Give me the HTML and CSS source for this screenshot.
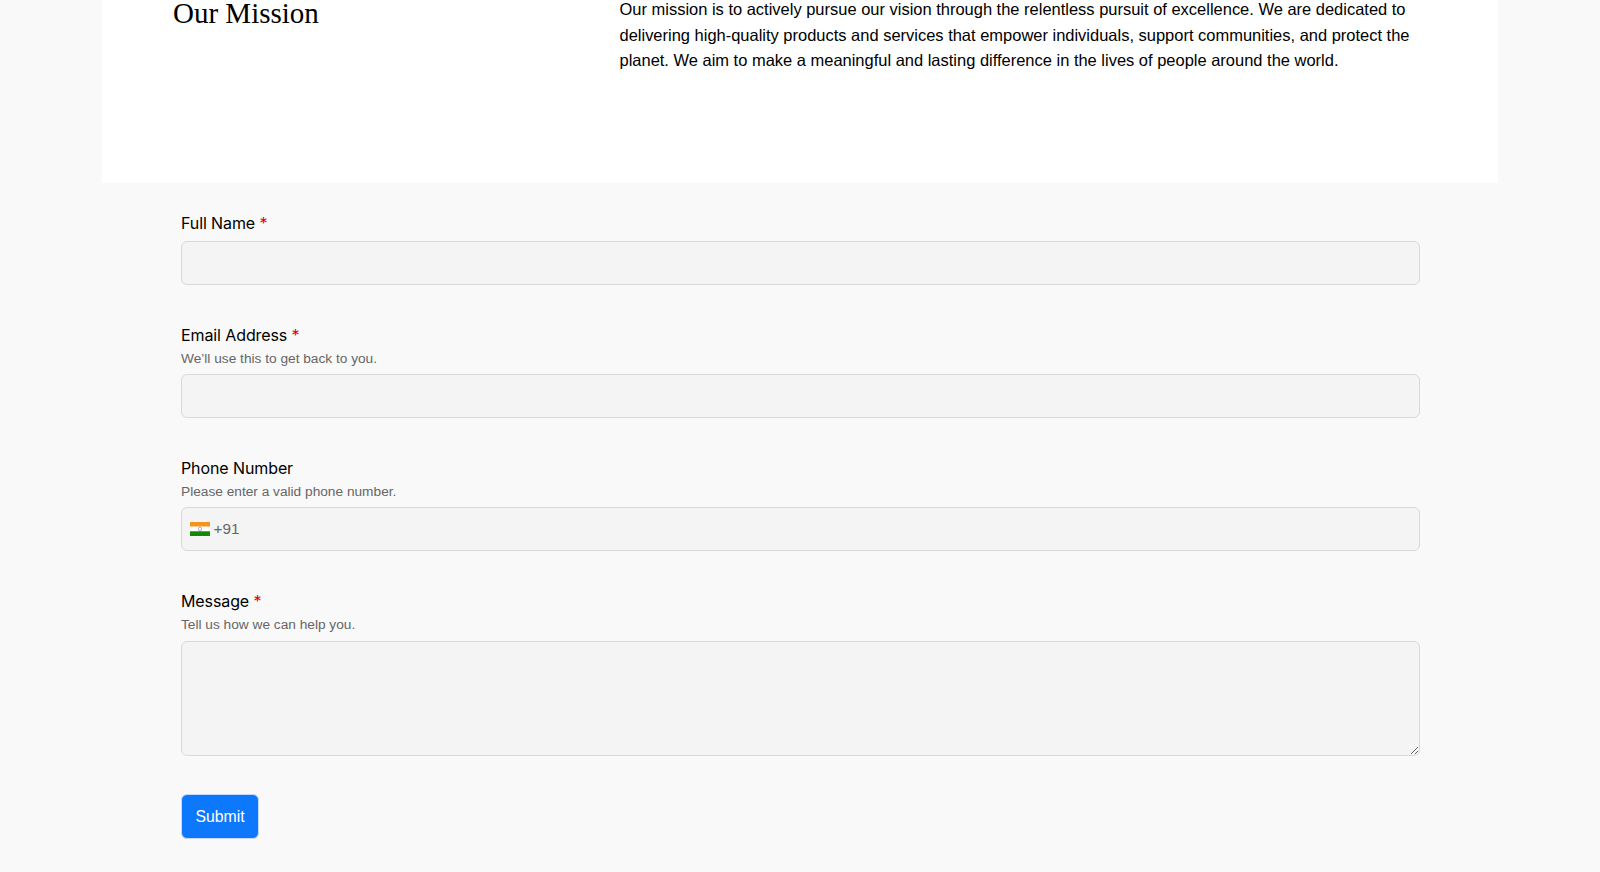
FILE: index.html
```html
<!DOCTYPE html>
<html lang="en">
<head>
    <meta charset="UTF-8">
    <meta name="viewport" content="width=device-width, initial-scale=1.0">
    <title>Contact Us</title>
    <link rel="stylesheet" href="styles.css">
</head>
<body>

    <div class="mission">
        <h2>Our Mission</h2>
        <p>Our mission is to actively pursue our vision through the relentless pursuit of excellence. We are dedicated to delivering high-quality products and services that empower individuals, support communities, and protect the planet. We aim to make a meaningful and lasting difference in the lives of people around the world.</p>
    </div>

    <form class="contact-form">
        <div class="form-group">
            <label for="fullName">Full Name <span class="required">*</span></label>
            <input type="text" id="fullName">
        </div>

        <div class="form-group">
            <label for="email">Email Address <span class="required">*</span></label>
            <small>We’ll use this to get back to you.</small>
            <input type="email" id="email">
        </div>

        <div class="form-group">
            <label for="phone">Phone Number</label>
            <small>Please enter a valid phone number.</small>
            <div class="phone-field">
                <svg class="flag" viewBox="0 0 20 14" aria-hidden="true">
                    <rect width="20" height="4.7" fill="#f7931e"/>
                    <rect y="4.7" width="20" height="4.6" fill="#ffffff"/>
                    <rect y="9.3" width="20" height="4.7" fill="#128807"/>
                    <circle cx="10" cy="7" r="1.7" fill="none" stroke="#8a8fc0" stroke-width="0.7"/>
                </svg>
                <span class="dial-code">+91</span>
                <input type="tel" id="phone">
            </div>
        </div>

        <div class="form-group message-group">
            <label for="message">Message <span class="required">*</span></label>
            <small>Tell us how we can help you.</small>
            <textarea id="message"></textarea>
        </div>

        <button type="button" class="submit-btn">Submit</button>
    </form>

</body>
</html>
```

FILE: styles.css
```css
body {
    font-family: "Liberation Sans", Arial, sans-serif;
    background-color: #f9f9f9;
    margin: 0;
    padding: 0;
    color: #000;
}

.mission {
    width: 1396px;
    height: 186px;
    margin: -3px auto 0;
    background-color: #fff;
    display: flex;
    box-sizing: border-box;
    padding-left: 71px;
}

.mission h2 {
    width: 446.5px;
    margin: 0;
    font-family: "Liberation Serif", "Times New Roman", serif;
    font-size: 29px;
    font-weight: 400;
    line-height: 33px;
}

.mission p {
    width: 810px;
    margin: 0;
    font-size: 16.48px;
    line-height: 25.5px;
}

.contact-form {
    width: 1239px;
    margin: 0 auto;
    padding-top: 30px;
}

.form-group {
    margin-bottom: 40px;
}

.form-group label {
    display: block;
    padding-left: 0.5px;
    font-family: Inter, sans-serif;
    font-size: 16px;
    font-weight: 400;
    letter-spacing: -0.1px;
    line-height: 20px;
    margin-bottom: 8px;
}

.form-group small {
    display: block;
    padding-left: 0.5px;
    font-size: 13.7px;
    line-height: 18px;
    color: #666;
    margin-top: -3px;
    margin-bottom: 6px;
}

.required {
    color: #e00000;
}

.form-group input,
.form-group textarea,
.phone-field {
    display: block;
    width: 100%;
    height: 44px;
    box-sizing: border-box;
    background-color: #f4f4f4;
    border: 1px solid #d9d9d9;
    border-radius: 6px;
    outline: none;
}

.message-group {
    margin-bottom: 38px;
}

.message-group small {
    margin-bottom: 7px;
}

.form-group textarea {
    height: 115px;
}

.phone-field {
    display: flex;
    align-items: center;
    padding-left: 8px;
}

.phone-field input {
    flex: 1;
    height: 100%;
    border: none;
    background: none;
}

.flag {
    width: 20px;
    height: 14px;
    flex-shrink: 0;
}

.dial-code {
    margin-left: 4px;
    margin-bottom: 1px;
    font-size: 15.3px;
    color: #666;
}

.submit-btn {
    display: block;
    width: 78px;
    height: 45px;
    padding: 0 0 0 1px;
    font-family: "Liberation Sans", Arial, sans-serif;
    font-size: 15.8px;
    color: #fff;
    background-color: #0d78fb;
    border: 1px solid #c4daf8;
    border-radius: 6px;
    cursor: pointer;
}
```
